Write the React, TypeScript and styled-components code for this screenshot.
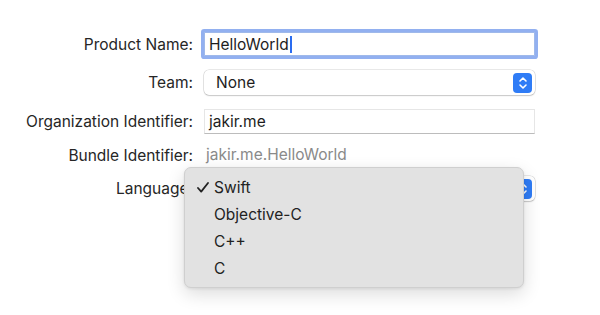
import React from "react";
import styled, { createGlobalStyle } from "styled-components";

const GlobalStyle = createGlobalStyle`
    html, body {
        margin: 0;
        padding: 0;
        background: #ffffff;
    }
    body {
        font-family: Inter, "Liberation Sans", sans-serif;
        font-size: 15.5px;
        -webkit-font-smoothing: antialiased;
    }
`;

const Page = styled.div`
    width: 600px;
    height: 315px;
    overflow: hidden;
    background: #ffffff;
`;

const Form = styled.div`
    display: flex;
    flex-direction: column;
    padding-top: 32px;
`;

const Row = styled.div<{ $space: number }>`
    display: grid;
    grid-template-columns: 193px 331px;
    column-gap: 11px;
    align-items: center;
    height: 24px;
    margin-top: ${(p) => p.$space}px;
`;

const Label = styled.div`
    text-align: right;
    color: #262626;
    white-space: nowrap;
`;

const Cell = styled.div`
    position: relative;
    height: 24px;
`;

const FocusField = styled.div`
    height: 24px;
    box-sizing: border-box;
    background: #ffffff;
    border: 1px solid #9fb9ea;
    box-shadow: 0 0 0 3px rgba(110, 150, 235, 0.75);
    border-radius: 1px;
    display: flex;
    align-items: center;
    padding-left: 4px;
    color: #1d1d1d;
`;

const Caret = styled.span`
    display: inline-block;
    width: 2px;
    height: 17px;
    margin-left: 1px;
    background: #2a6cf0;
`;

const PlainField = styled.div`
    height: 25px;
    box-sizing: border-box;
    background: #ffffff;
    border: 1px solid #e6e6e6;
    border-bottom-color: #bcbcbc;
    display: flex;
    align-items: center;
    padding-left: 4px;
    color: #1d1d1d;
`;

const StaticValue = styled.div`
    color: #8a8a8a;
    padding-left: 2px;
    line-height: 24px;
`;

const Popup = styled.div`
    height: 25px;
    box-sizing: border-box;
    background: #ffffff;
    border-radius: 5px;
    box-shadow: 0 0 0 0.5px rgba(0, 0, 0, 0.18), 0 1px 1.5px rgba(0, 0, 0, 0.14);
    display: flex;
    align-items: center;
    justify-content: space-between;
    padding: 0 3px 0 12px;
    color: #1d1d1d;
`;

const Stepper = styled.div`
    width: 19px;
    height: 20px;
    border-radius: 4px;
    background: #2f7cf6;
    display: flex;
    align-items: center;
    justify-content: center;
`;

const Menu = styled.div`
    position: absolute;
    left: -20px;
    top: -9px;
    width: 340px;
    box-sizing: border-box;
    padding: 6px 0 5px;
    background: #e2e2e2;
    border: 1px solid #cfcfcf;
    border-radius: 7px;
    box-shadow: 0 6px 18px rgba(0, 0, 0, 0.14), 0 1px 3px rgba(0, 0, 0, 0.08);
    z-index: 2;
`;

const MenuItem = styled.div`
    position: relative;
    height: 27px;
    display: flex;
    align-items: center;
    padding-left: 29px;
    color: #222222;
`;

const Check = styled.svg`
    position: absolute;
    left: 12px;
    top: 8px;
`;

const StepperIcon = () => (
    <svg width="10" height="14" viewBox="0 0 10 14" fill="none">
        <path d="M2 5 L5 2 L8 5" stroke="#fff" strokeWidth="1.6" strokeLinecap="round" strokeLinejoin="round" />
        <path d="M2 9 L5 12 L8 9" stroke="#fff" strokeWidth="1.6" strokeLinecap="round" strokeLinejoin="round" />
    </svg>
);

const languages = ["Swift", "Objective-C", "C++", "C"];

const App: React.FC = () => {
    return (
        <Page>
            <GlobalStyle />
            <Form>
                <Row $space={0}>
                    <Label>Product Name:</Label>
                    <Cell>
                        <FocusField>
                            HelloWorld
                            <Caret />
                        </FocusField>
                    </Cell>
                </Row>
                <Row $space={14}>
                    <Label>Team:</Label>
                    <Cell>
                        <Popup>
                            None
                            <Stepper>
                                <StepperIcon />
                            </Stepper>
                        </Popup>
                    </Cell>
                </Row>
                <Row $space={15}>
                    <Label>Organization Identifier:</Label>
                    <Cell>
                        <PlainField>jakir.me</PlainField>
                    </Cell>
                </Row>
                <Row $space={10}>
                    <Label>Bundle Identifier:</Label>
                    <Cell>
                        <StaticValue>jakir.me.HelloWorld</StaticValue>
                    </Cell>
                </Row>
                <Row $space={9}>
                    <Label>Language:</Label>
                    <Cell>
                        <Popup>
                            <span />
                            <Stepper>
                                <StepperIcon />
                            </Stepper>
                        </Popup>
                        <Menu>
                            {languages.map((lang, i) => (
                                <MenuItem key={lang}>
                                    {i === 0 && (
                                        <Check width="12" height="11" viewBox="0 0 12 11" fill="none">
                                            <path
                                                d="M1 6 L4.2 9.6 L11 1"
                                                stroke="#222"
                                                strokeWidth="1.8"
                                                strokeLinecap="round"
                                                strokeLinejoin="round"
                                            />
                                        </Check>
                                    )}
                                    {lang}
                                </MenuItem>
                            ))}
                        </Menu>
                    </Cell>
                </Row>
            </Form>
        </Page>
    );
};

export default App;
